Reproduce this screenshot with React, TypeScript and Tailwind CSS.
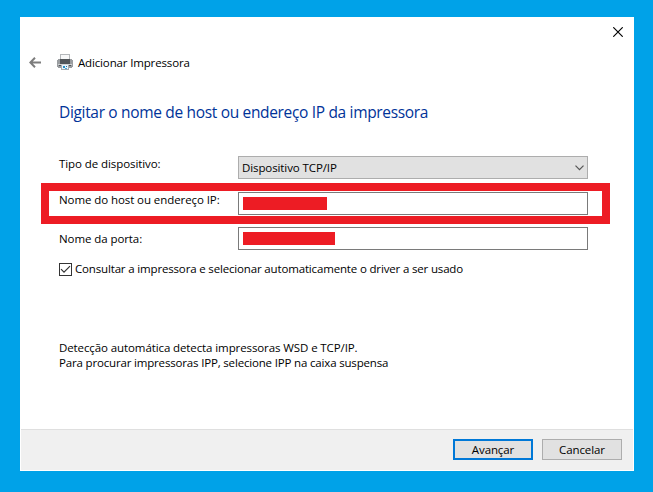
import React from "react";

function PrinterIcon() {
  return (
    <svg width="16" height="16" viewBox="0 0 16 16" shapeRendering="crispEdges">
      <rect x="3" y="0" width="10" height="6" fill="#b4b7ba" />
      <rect x="4" y="1" width="8" height="5" fill="#f7f8f9" />
      <path d="M1 5h2v1h10V5h2v1h1v7h-1v1H1v-1H0V6h1z" fill="#9a9da0" />
      <rect x="3" y="5" width="10" height="5" fill="#505458" />
      <rect x="1" y="10" width="14" height="1" fill="#d0d2d4" />
      <rect x="2" y="11" width="12" height="1" fill="#505458" />
      <rect x="4" y="11" width="8" height="5" fill="#a4a9ad" />
      <rect x="5" y="11" width="6" height="4" fill="#e8f3fa" />
      <rect x="6" y="12" width="2" height="2" fill="#258bc4" />
      <rect x="9" y="12" width="1" height="1" fill="#2b6f9c" />
      <rect x="8" y="14" width="2" height="1" fill="#47a6d8" />
    </svg>
  );
}

function Field({ label, labelClass, children }: { label: string; labelClass: string; children: React.ReactNode }) {
  return (
    <div className="flex h-[23px] w-[529px]">
      <span className={`w-[179px] shrink-0 leading-4 ${labelClass}`}>{label}</span>
      {children}
    </div>
  );
}

export default function App() {
  return (
    <div className="h-[492px] w-[653px] overflow-hidden bg-[#00a2e8] pl-5 pt-[17px] font-['Open_Sans','Noto_Sans',sans-serif] text-[11.5px] whitespace-nowrap text-black">
      <main className="relative flex h-[454px] w-[614px] flex-col border border-white bg-white">
        <div className="flex h-[28px] shrink-0 justify-end pr-[10px] pt-[9px]">
          <button aria-label="Fechar" className="h-[10px] w-[10px]">
            <svg width="10" height="10" viewBox="0 0 10 10" fill="none" stroke="#000" strokeWidth="1.15">
              <path d="M.3.3l9.4 9.4M9.7.3L.3 9.7" />
            </svg>
          </button>
        </div>
        <header className="flex h-[32px] shrink-0 items-start pl-2 pt-2">
          <svg className="mt-[3px]" width="12" height="11" viewBox="0 0 12 11" fill="none" stroke="#7d7d7d" strokeWidth="2">
            <path d="M12 5.5H1.5M6 .8L1.3 5.5 6 10.2" />
          </svg>
          <span className="ml-4"><PrinterIcon /></span>
          <span className="ml-[5px] mt-px leading-4 tracking-[-0.15px]">Adicionar Impressora</span>
        </header>
        <section className="flex grow flex-col pl-[38px]">
          <h1 className="mt-[22px] text-[15.5px] leading-6 tracking-[-0.33px] text-[#003399]">
            Digitar o nome de host ou endereço IP da impressora
          </h1>
          <div className="mt-[32px]">
            <Field label="Tipo de dispositivo:" labelClass="tracking-[-0.08px]">
              <div className="flex w-[350px] items-center justify-between border border-[#adadad] bg-[#e1e1e1] pl-[3px] pr-[3px]">
                <span className="tracking-[-0.1px]">Dispositivo TCP/IP</span>
                <svg width="9" height="6" viewBox="0 0 9 6" fill="none" stroke="#555" strokeWidth="1.2">
                  <path d="M.5.7l4 4 4-4" />
                </svg>
              </div>
            </Field>
            <div className="mt-[13px]">
              <Field label="Nome do host ou endereço IP:" labelClass="tracking-[-0.08px]">
                <div className="w-[350px] border border-[#7a7a7a] bg-white pl-1 pt-1">
                  <div className="h-[13px] w-[84px] bg-[#ed1c24]" />
                </div>
              </Field>
            </div>
            <div className="mt-[12px]">
              <Field label="Nome da porta:" labelClass="pt-[4px] tracking-[-0.08px]">
                <div className="w-[350px] border border-[#7a7a7a] bg-white pl-1 pt-1">
                  <div className="h-[13px] w-[92px] bg-[#ed1c24]" />
                </div>
              </Field>
            </div>
            <label className="mt-[11px] flex h-4 items-center">
              <span className="flex h-[13px] w-[13px] items-center justify-center border border-[#333]">
                <svg width="11" height="11" viewBox="0 0 11 11" fill="none" stroke="#333" strokeWidth="1.2">
                  <path d="M1 5.2l3 3 6-6" />
                </svg>
              </span>
              <span className="ml-[3px] tracking-[-0.16px]">Consultar a impressora e selecionar automaticamente o driver a ser usado</span>
            </label>
            <div className="mt-[63px] leading-[15px]">
              <p className="tracking-[-0.1px]">Detecção automática detecta impressoras WSD e TCP/IP.</p>
              <p className="tracking-[-0.17px]">Para procurar impressoras IPP, selecione IPP na caixa suspensa</p>
            </div>
          </div>
        </section>
        <footer className="flex h-[41px] shrink-0 justify-end gap-[9px] border-t border-[#dfdfdf] bg-[#f0f0f0] pr-[11px] pt-[9px]">
          <button className="h-[21px] w-[80px] border-2 border-[#0078d7] bg-[#e1e1e1] leading-4 tracking-[-0.1px]">Avançar</button>
          <button className="h-[21px] w-[80px] border border-[#adadad] bg-[#e1e1e1] leading-4 tracking-[-0.1px]">Cancelar</button>
        </footer>
        <div className="pointer-events-none absolute left-[20px] top-[165px] h-[41px] w-[569px] border-8 border-[#ed1c24]" />
      </main>
    </div>
  );
}
